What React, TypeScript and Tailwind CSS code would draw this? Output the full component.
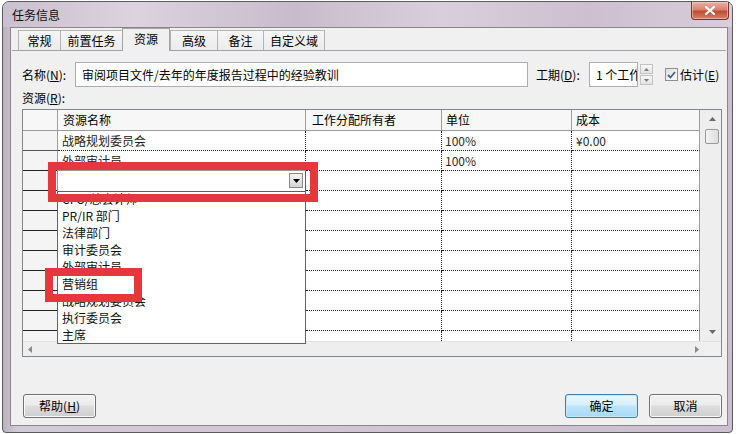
import React from "react";

const Tri = ({ dir, color = "#000", w = 7, h = 4 }: { dir: "up" | "down" | "left" | "right"; color?: string; w?: number; h?: number }) => {
  const pts =
    dir === "down"
      ? `0,0 ${w},0 ${w / 2},${h}`
      : dir === "up"
      ? `0,${h} ${w},${h} ${w / 2},0`
      : dir === "left"
      ? `${w},0 ${w},${h} 0,${h / 2}`
      : `0,0 0,${h} ${w},${h / 2}`;
  return (
    <svg width={w} height={h} viewBox={`0 0 ${w} ${h}`} className="block">
      <polygon points={pts} fill={color} />
    </svg>
  );
};

const tabs = [
  { t: "常规", w: "w-[42px]" },
  { t: "前置任务", w: "w-[62px]" },
  { t: "资源", w: "w-[48px]", sel: true },
  { t: "高级", w: "w-[47px]" },
  { t: "备注", w: "w-[46px]" },
  { t: "自定义域", w: "w-[62px]", last: true },
];

const rows: string[][] = [
  ["战略规划委员会", "", "100%", "¥0.00"],
  ["外部审计员", "", "100%", ""],
  ["", "", "", ""],
  ["", "", "", ""],
  ["", "", "", ""],
  ["", "", "", ""],
  ["", "", "", ""],
  ["", "", "", ""],
  ["", "", "", ""],
  ["", "", "", ""],
  ["", "", "", ""],
];

const listItems = [
  "CFO/总会计师",
  "PR/IR 部门",
  "法律部门",
  "审计委员会",
  "外部审计员",
  "营销组",
  "战略规划委员会",
  "执行委员会",
  "主席",
];

function Btn({ children, primary }: { children: React.ReactNode; primary?: boolean }) {
  return (
    <div
      className={
        "flex h-[24px] w-[73px] items-center justify-center rounded-[3px] border " +
        (primary
          ? "border-[#3c7fb1] bg-[linear-gradient(180deg,#eaf6fd_0%,#d9f0fc_45%,#bee6fd_50%,#a7d9f5_100%)] shadow-[inset_0_0_0_1px_#c9e9fb]"
          : "border-[#707070] bg-[linear-gradient(180deg,#f2f2f2_0%,#ebebeb_45%,#dddddd_50%,#cfcfcf_100%)] shadow-[inset_0_0_0_1px_#fafafa]")
      }
    >
      {children}
    </div>
  );
}

export default function App() {
  return (
    <div className="relative h-[434px] w-[740px] overflow-hidden bg-white font-['Noto_Sans_CJK_SC',sans-serif] text-[12px] leading-[16px] text-black">
      {/* window */}
      <div className="ml-[2px] mt-[1px] flex h-[432px] w-[731px] flex-col rounded-t-[7px] rounded-b-[4px] border border-[#5d5862] bg-[linear-gradient(90deg,#b9b2bd_0%,#d2cad5_2%,#cfc6d2_50%,#cbc1ce_100%)]">
        {/* title bar */}
        <div className="flex h-[25px] items-start justify-between rounded-t-[6px] bg-[linear-gradient(90deg,#cbc0ce_0%,#dcd3de_18%,#c8bccc_40%,#d9cfdb_60%,#cdbfd0_80%,#d8cdda_100%)]">
          <span className="ml-[9px] mt-[5px] text-[12px] leading-[16px] text-[#111]">任务信息</span>
          <div className="mr-[3px] flex h-[18px] w-[38px] items-center justify-center rounded-b-[4px] border border-t-0 border-[#7c3128] bg-[linear-gradient(180deg,#e9b1a3_0%,#d9826e_45%,#c44a34_55%,#d5826b_100%)] shadow-[inset_0_0_0_1px_rgba(255,220,210,0.5)]">
            <svg width="10" height="9" viewBox="0 0 10 9">
              <path d="M1 1 L9 8 M9 1 L1 8" stroke="#fff" strokeWidth="2.2" strokeLinecap="square" />
            </svg>
          </div>
        </div>
        {/* frame */}
        <div className="flex flex-1 pb-[6px] pl-[7px] pr-[4px]">
          <div className="flex flex-1 flex-col border border-[#8b8590] bg-[#f0f0f0]">
            {/* tabs */}
            <div className="mt-[2px] flex h-[20px] items-end pl-[7px]">
              {tabs.map((tb) =>
                tb.sel ? (
                  <div
                    key={tb.t}
                    className={`relative z-10 -mb-[1px] flex h-[23px] ${tb.w} items-center justify-center border-x border-t border-[#a3a3a3] bg-[#f0f0f0] pb-[2px]`}
                  >
                    {tb.t}
                  </div>
                ) : (
                  <div
                    key={tb.t}
                    className={`flex h-[20px] ${tb.w} items-center justify-center border-l border-t border-[#b4b4b4] bg-[linear-gradient(180deg,#f6f6f6,#ebebeb)] ${tb.last ? "border-r" : ""}`}
                  >
                    {tb.t}
                  </div>
                )
              )}
            </div>
            {/* panel */}
            <div className="mx-[1px] flex flex-1 flex-col border-t border-[#a3a3a3] pl-[10px] pr-[4px]">
              {/* name row */}
              <div className="mt-[11px] flex h-[25px] items-center">
                <div className="w-[53px]">
                  名称(<span className="underline">N</span>):
                </div>
                <div className="flex h-[25px] w-[453px] items-center border border-[#abadb3] bg-white pl-[6px]">
                  审阅项目文件/去年的年度报告过程中的经验教训
                </div>
                <div className="ml-[8px] w-[53px]">
                  工期(<span className="underline">D</span>):
                </div>
                <div className="flex h-[25px] w-[49px] items-center overflow-hidden whitespace-nowrap border border-[#abadb3] bg-white pl-[6px]">
                  1 个工作日
                </div>
                <div className="ml-[2px] flex h-[21px] w-[13px] flex-col gap-[1px]">
                  <div className="flex flex-1 items-center justify-center border border-[#c3c3c3] bg-[linear-gradient(180deg,#f7f7f7,#e3e3e3)]">
                    <Tri dir="up" color="#7a7a7a" w={5} h={3} />
                  </div>
                  <div className="flex flex-1 items-center justify-center border border-[#c3c3c3] bg-[linear-gradient(180deg,#f7f7f7,#e3e3e3)]">
                    <Tri dir="down" color="#7a7a7a" w={5} h={3} />
                  </div>
                </div>
                <div className="ml-[12px] flex h-[13px] w-[13px] items-center justify-center border border-[#8f8f8f] bg-[linear-gradient(135deg,#dcdcdc,#ffffff)]">
                  <svg width="9" height="8" viewBox="0 0 9 8">
                    <path d="M1 4 L3.5 6.5 L8 1" stroke="#4a5f8a" strokeWidth="1.8" fill="none" />
                  </svg>
                </div>
                <div className="ml-[2px]">
                  估计(<span className="underline">E</span>)
                </div>
              </div>
              {/* resources label */}
              <div className="flex h-[22px] items-center">
                资源(<span className="underline">R</span>):
              </div>
              {/* grid */}
              <div className="flex h-[248px] w-[700px] flex-col border border-[#82878f] bg-white">
                <div className="flex h-[231px]">
                  <div className="flex w-[677px] flex-col overflow-hidden">
                    {/* header */}
                    <div className="flex h-[21px] shrink-0 border-b border-[#9d9d9d] bg-[#f7f7f7]">
                      <div className="w-[35px] border-r border-[#9d9d9d]" />
                      <div className="w-[248px] border-r border-[#9d9d9d] pl-[5px] leading-[20px]">资源名称</div>
                      <div className="w-[136px] border-r border-[#9d9d9d] pl-[6px] leading-[20px]">工作分配所有者</div>
                      <div className="w-[130px] border-r border-[#9d9d9d] pl-[4px] leading-[20px]">单位</div>
                      <div className="w-[128px] border-r border-[#9d9d9d] pl-[4px] leading-[20px]">成本</div>
                    </div>
                    {rows.map((r, i) => (
                      <div key={i} className="flex h-[20px] shrink-0">
                        <div className={`w-[35px] border-b border-r ${i === 0 ? "border-b-[#555]" : "border-b-[#222]"} border-r-[#9d9d9d] bg-[#f4f4f4]`} />
                        <div className="w-[248px] border-b border-r border-dotted border-[#222] pl-[4px] leading-[19px] text-[#222]">{r[0]}</div>
                        <div className="w-[136px] border-b border-r border-dotted border-[#222] pl-[4px] leading-[19px]">{r[1]}</div>
                        <div className="w-[130px] border-b border-r border-dotted border-[#222] pl-[3px] leading-[19px] text-[#2a2a2a]">{r[2]}</div>
                        <div className="w-[128px] border-b border-r border-dotted border-[#222] border-r-[#9d9d9d] pl-[4px] leading-[19px] text-[#2a2a2a]" style={{ borderRightStyle: "solid" }}>{r[3]}</div>
                      </div>
                    ))}
                  </div>
                  {/* vertical scrollbar */}
                  <div className="flex w-[21px] flex-col items-center bg-[#eeeeee] pl-[3px]">
                    <div className="mt-[6px] flex h-[6px] items-center">
                      <Tri dir="up" color="#6a6a6a" w={7} h={4} />
                    </div>
                    <div className="mt-[7px] h-[15px] w-[14px] rounded-[2px] border border-[#9a9a9a] bg-[linear-gradient(90deg,#f3f3f3,#dedede)]" />
                    <div className="flex-1" />
                    <div className="mb-[6px] flex h-[6px] items-center">
                      <Tri dir="down" color="#6a6a6a" w={7} h={4} />
                    </div>
                  </div>
                </div>
                {/* horizontal scrollbar */}
                <div className="flex h-[16px] border-t border-[#e2e2e2] bg-[#eeeeee]">
                  <div className="flex w-[681px] items-center justify-between pl-[5px] pr-[5px]">
                    <Tri dir="left" color="#8a8a8a" w={4} h={7} />
                    <Tri dir="right" color="#8a8a8a" w={4} h={7} />
                  </div>
                  <div className="flex-1 bg-[#f0f0f0]" />
                </div>
              </div>
              {/* buttons */}
              <div className="mt-[37px] flex items-center">
                <div className="ml-[1px]">
                  <Btn>
                    帮助(<span className="underline">H</span>)
                  </Btn>
                </div>
                <div className="ml-auto">
                  <Btn primary>确定</Btn>
                </div>
                <div className="ml-[11px]">
                  <Btn>取消</Btn>
                </div>
              </div>
            </div>
          </div>
        </div>
      </div>

      {/* dropdown list (popup) */}
      <div className="absolute left-[57px] top-[189px] flex h-[155px] w-[249px] flex-col border border-[#646464] bg-white">
        {listItems.map((it) => (
          <div key={it} className="h-[17px] shrink-0 pl-[4px] leading-[17px] text-[#111]">
            {it}
          </div>
        ))}
      </div>
      {/* combo box in edit cell */}
      <div className="absolute left-[57px] top-[170px] h-[22px] w-[249px] border border-[#9a9a9a] border-b-[#5f5f5f] border-r-[#5f5f5f] bg-white">
        <div className="absolute right-[2px] top-[2px] flex h-[15px] w-[14px] items-center justify-center border border-[#8a8a8a] bg-[linear-gradient(180deg,#f4f4f4,#d6d6d6)]">
          <Tri dir="down" color="#000" w={7} h={4} />
        </div>
      </div>

      {/* annotation boxes */}
      <div className="absolute left-[48px] top-[162px] h-[40px] w-[270px] border-[8px] border-[#e6373f]" />
      <div className="absolute left-[45px] top-[268px] h-[34px] w-[97px] border-[8px] border-[#e6373f]" />
    </div>
  );
}
